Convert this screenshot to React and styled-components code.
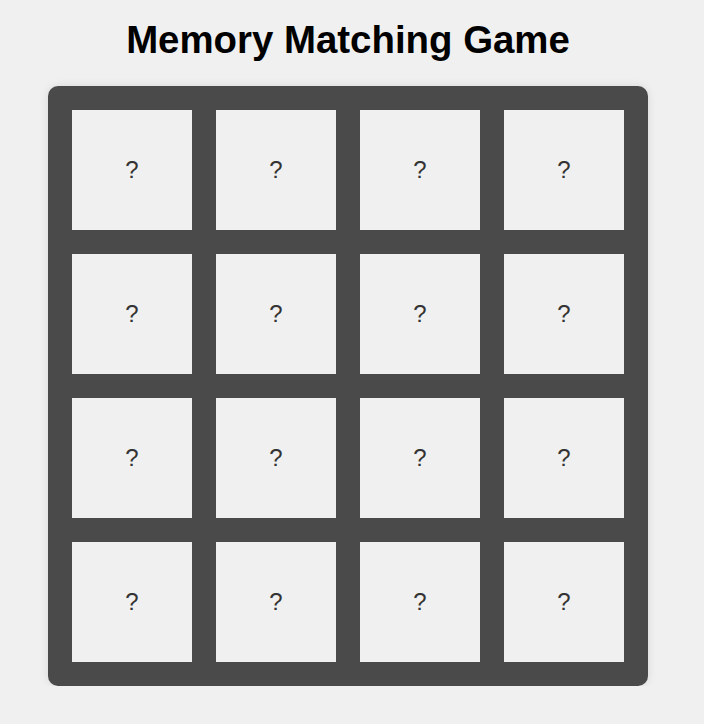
import React from "react";
import styled, { createGlobalStyle } from "styled-components";

const GlobalStyle = createGlobalStyle`
  body {
    margin: 0;
    background: #f0f0f0;
    font-family: "Liberation Sans", Arial, sans-serif;
  }
`;

const cards = Array.from({ length: 16 }, (_, i) => i);

export default function App() {
  return (
    <Page>
      <GlobalStyle />
      <Title>Memory Matching Game</Title>
      <Board>
        {cards.map((i) => (
          <Card key={i}>?</Card>
        ))}
      </Board>
    </Page>
  );
}

const Page = styled.div`
  width: 696px;
  display: flex;
  flex-direction: column;
  align-items: center;
  padding-top: 18px;
`;

const Title = styled.h1`
  margin: 0 0 24px 0;
  font-size: 38.4px;
  line-height: 44px;
  font-weight: bold;
  color: #000;
`;

const Board = styled.div`
  display: grid;
  grid-template-columns: repeat(4, 120px);
  grid-auto-rows: 120px;
  gap: 24px;
  padding: 24px;
  background: #4a4a4a;
  border-radius: 10px;
  box-shadow: 0 0 10px rgba(0, 0, 0, 0.1);
`;

const Card = styled.div`
  background: #f0f0f0;
  display: flex;
  align-items: center;
  justify-content: center;
  font-size: 24px;
  color: #333;
  cursor: pointer;
`;
